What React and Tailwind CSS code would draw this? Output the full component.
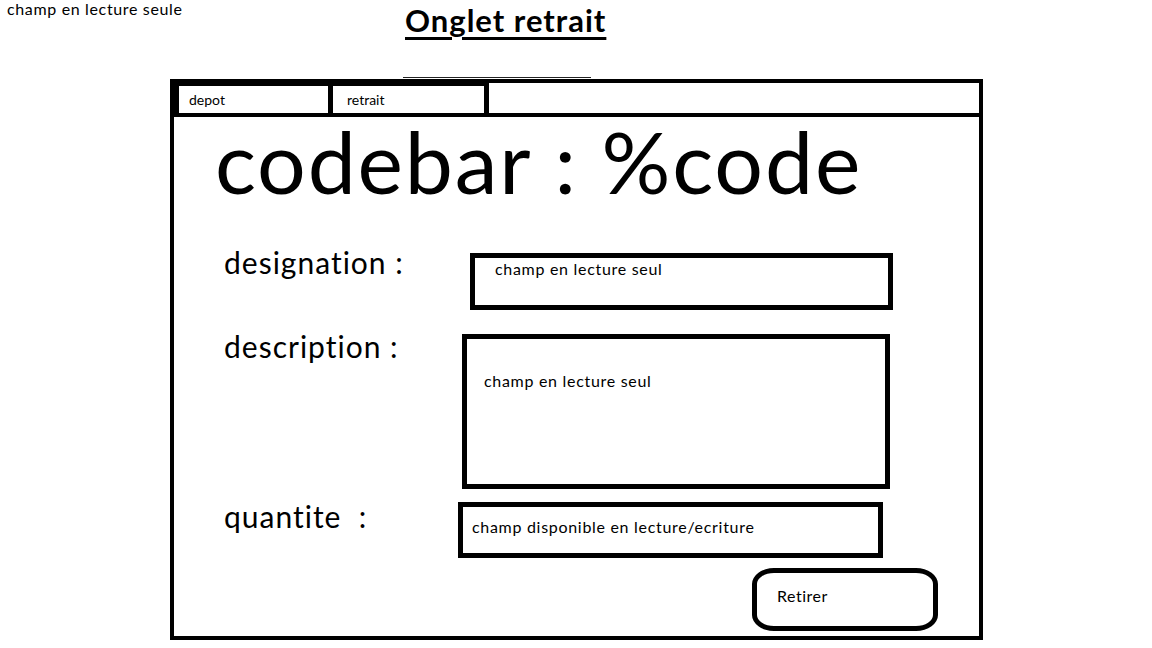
export default function App() {
  return (
    <div className="w-[1152px] h-[648px] bg-white text-black overflow-hidden font-[Lato,sans-serif]">
      <div className="flex items-start h-[77px]">
        <div className="w-[399px] pl-[7px] pt-px text-[16px] leading-[16px] tracking-[0.65px]">champ en lecture seule</div>
        <div className="ml-[6px] pt-[5px] text-[31px] leading-[31px] tracking-[1px] font-bold underline decoration-[3px] underline-offset-[5px]">
          Onglet retrait
        </div>
      </div>
      <div className="ml-[403px] w-[188px] h-px bg-[#222]"></div>
      <div className="mt-[1px] ml-[170px] w-[813px] h-[561px] border-[4px] border-black flex flex-col">
        <div className="flex h-[34px]">
          <div className="w-[159px] border-t-[3px] border-l-[5px] border-r-[5px] border-b-[4px] border-black flex items-center pl-[10px] text-[14px] leading-[14px]">
            depot
          </div>
          <div className="w-[156px] border-t-[3px] border-r-[5px] border-b-[4px] border-black flex items-center pl-[14px] text-[14px] leading-[14px]">
            retrait
          </div>
          <div className="flex-1 border-b-[4px] border-black"></div>
        </div>
        <div className="flex-1 flex flex-col">
          <div className="mt-[1px] ml-[41px] text-[86px] leading-[86px] tracking-[1.8px]">codebar : %code</div>

          <div className="mt-[43px] flex items-start">
            <div className="ml-[50px] w-[246px] text-[30px] leading-[30px] tracking-[1px]">designation :</div>
            <div className="mt-[6px] w-[423px] h-[57px] border-[5px] border-black pt-[3px] pl-[20px] text-[16px] leading-[16px] tracking-[0.7px]">
              champ en lecture seul
            </div>
          </div>

          <div className="mt-[21px] flex items-start">
            <div className="ml-[50px] w-[238px] text-[30px] leading-[30px] tracking-[1px]">description :</div>
            <div className="mt-[3px] w-[428px] h-[155px] border-[5px] border-black pt-[34px] pl-[17px] text-[16px] leading-[16px] tracking-[0.7px]">
              champ en lecture seul
            </div>
          </div>

          <div className="mt-[12px] flex items-start">
            <div className="ml-[50px] w-[234px] text-[30px] leading-[30px] tracking-[1px] whitespace-pre">quantite  :</div>
            <div className="mt-[1px] w-[425px] h-[56px] border-[5px] border-black pt-[12px] pl-[9px] text-[16px] leading-[16px] tracking-[0.7px]">
              champ disponible en lecture/ecriture
            </div>
          </div>

          <button className="mt-[10px] ml-[578px] w-[186px] h-[63px] border-[5px] border-black rounded-[22px/16px] pt-[15px] pl-[20px] text-left self-start flex items-start text-[16px] leading-[16px] tracking-[0.5px]">
            Retirer
          </button>
        </div>
      </div>
    </div>
  );
}
